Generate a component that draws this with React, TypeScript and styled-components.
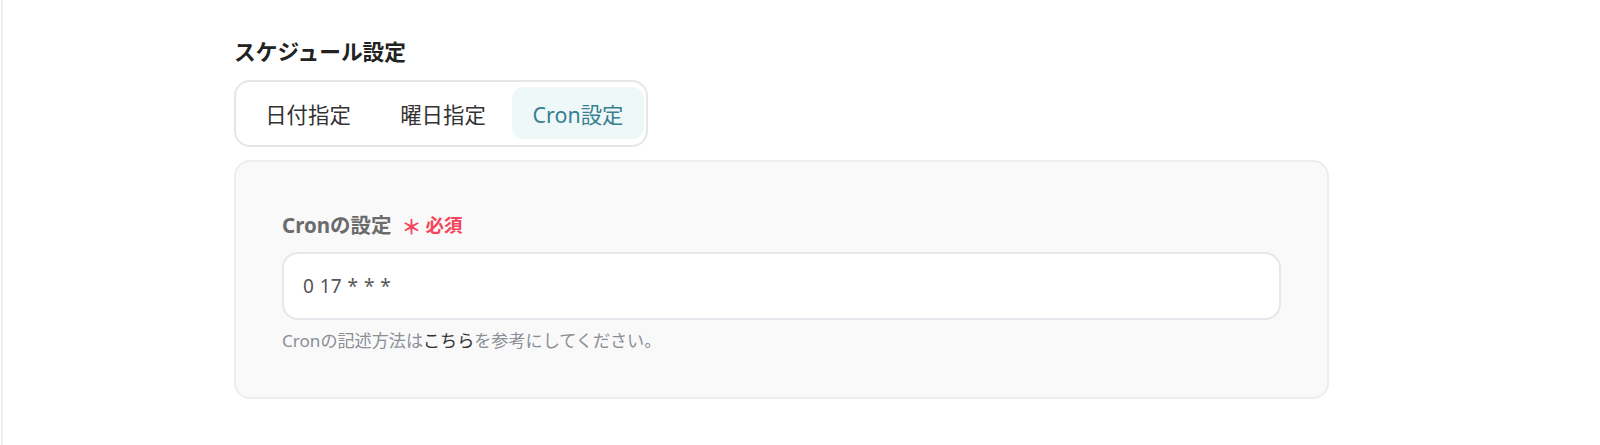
import React from "react";
import styled, { createGlobalStyle } from "styled-components";

const GlobalStyle = createGlobalStyle`
  html, body {
    margin: 0;
    padding: 0;
    background: #ffffff;
  }
  body {
    font-family: "Noto Sans", "Noto Sans CJK JP", sans-serif;
    color: #2b2b2b;
  }
`;

const Frame = styled.div`
  margin-left: 1px;
  border-left: 2px solid #efefef;
  min-height: 445px;
  box-sizing: border-box;
  padding: 37px 0 0 231px;
`;

const Section = styled.section`
  display: flex;
  flex-direction: column;
  align-items: flex-start;
`;

const Title = styled.h2`
  margin: 0;
  font-size: 21.7px;
  line-height: 30px;
  font-weight: 700;
  color: #222222;
`;

const TabList = styled.div`
  margin-top: 13px;
  display: flex;
  gap: 3px;
  padding: 5px 2px 6px 6px;
  border: 2px solid #e6e6e6;
  border-radius: 16px;
  background: #ffffff;
`;

const Tab = styled.button<{ $active?: boolean }>`
  width: 132px;
  height: 52px;
  border: none;
  border-radius: 12px;
  font-family: inherit;
  font-size: 21.4px;
  font-weight: 400;
  cursor: pointer;
  padding: 0;
  background: ${(p) => (p.$active ? "#eef8f8" : "transparent")};
  color: ${(p) => (p.$active ? "#37808f" : "#333333")};
`;

const Panel = styled.div`
  margin-top: 13px;
  width: 1095px;
  box-sizing: border-box;
  padding: 48px 46px 45px;
  border: 2px solid #ededed;
  border-radius: 16px;
  background: #f9f9f9;
  display: flex;
  flex-direction: column;
`;

const LabelRow = styled.div`
  display: flex;
  align-items: center;
  height: 28px;
  gap: 10px;
`;

const Label = styled.span`
  font-size: 20.5px;
  font-weight: 700;
  color: #6b6b6b;
`;

const Required = styled.span`
  display: flex;
  align-items: center;
  gap: 4px;
  color: #f5455c;
  font-weight: 700;
`;

const Star = styled.span`
  font-family: "Noto Sans CJK JP", sans-serif;
  font-size: 20px;
  line-height: 1;
  margin-top: 5px;
`;

const RequiredText = styled.span`
  font-size: 18.5px;
`;

const Input = styled.input`
  margin-top: 14px;
  height: 68px;
  box-sizing: border-box;
  width: 100%;
  border: 2px solid #e4e7eb;
  border-radius: 16px;
  background: #ffffff;
  padding: 0 19px;
  font-family: inherit;
  font-size: 19px;
  word-spacing: 1px;
  color: #555555;
  outline: none;
`;

const Help = styled.p`
  margin: 10px 0 0;
  font-size: 17.1px;
  line-height: 22px;
  color: #8a8f96;
`;

const Link = styled.a`
  color: #333333;
  text-decoration: none;
`;

export default function App() {
  return (
    <>
      <GlobalStyle />
      <Frame>
        <Section>
          <Title>スケジュール設定</Title>
          <TabList>
            <Tab>日付指定</Tab>
            <Tab>曜日指定</Tab>
            <Tab $active>Cron設定</Tab>
          </TabList>
          <Panel>
            <LabelRow>
              <Label>Cronの設定</Label>
              <Required>
                <Star>＊</Star>
                <RequiredText>必須</RequiredText>
              </Required>
            </LabelRow>
            <Input defaultValue="0 17 * * *" readOnly />
            <Help>
              Cronの記述方法は<Link href="#">こちら</Link>を参考にしてください。
            </Help>
          </Panel>
        </Section>
      </Frame>
    </>
  );
}
